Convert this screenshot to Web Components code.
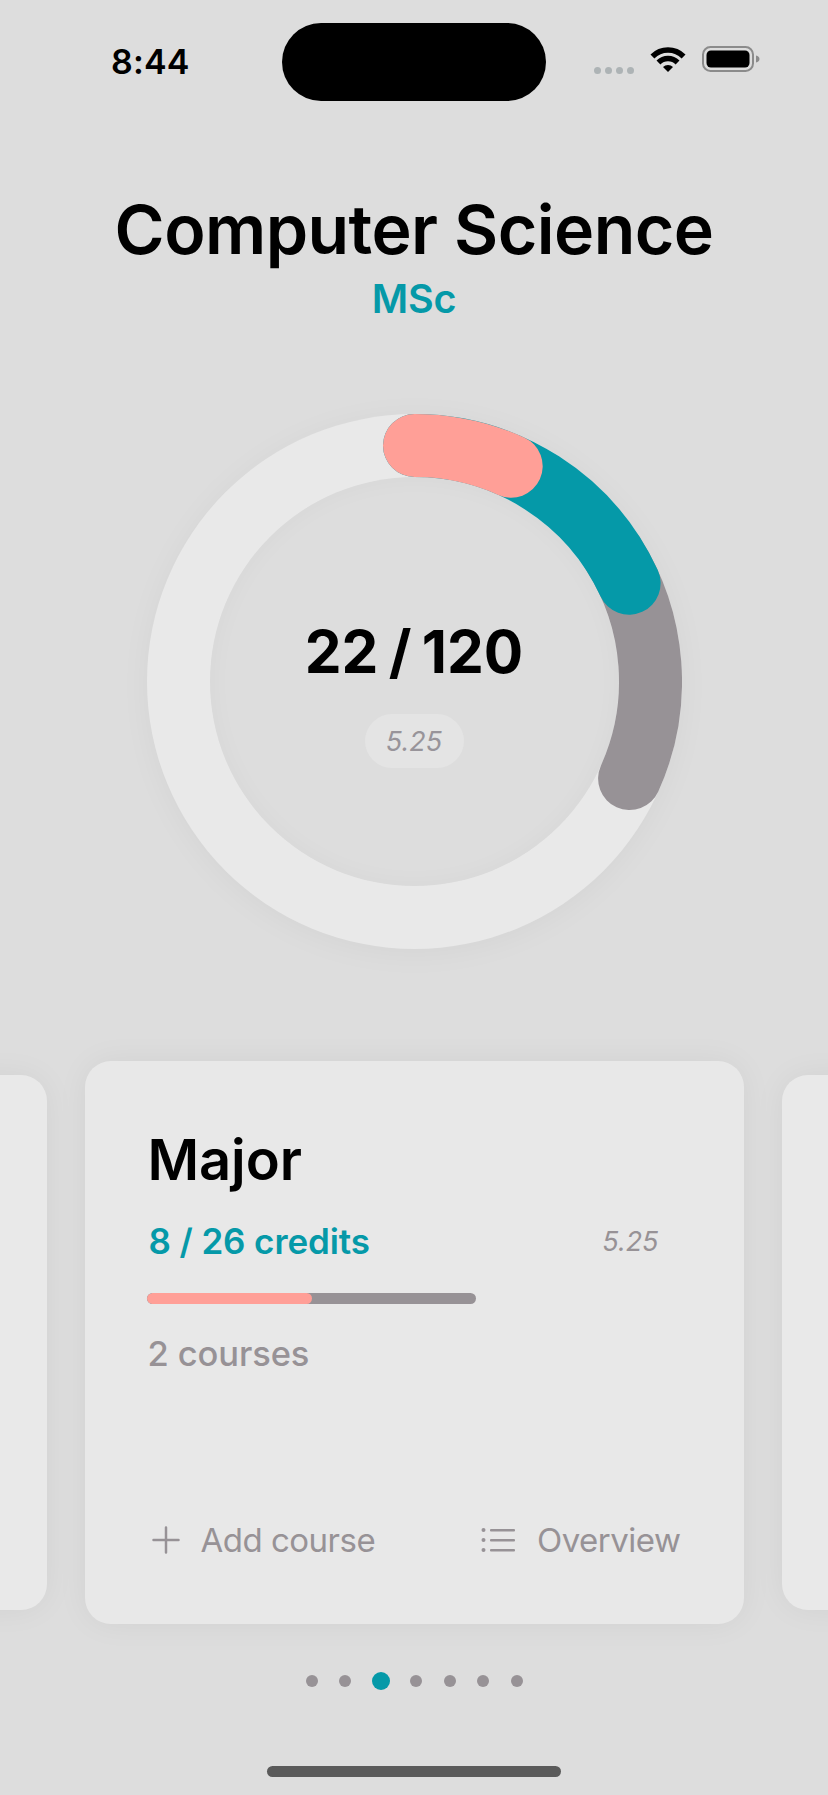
<!DOCTYPE html>
<html lang="en"><head><meta charset="utf-8"><title>Computer Science</title>
<style>
html,body{margin:0;padding:0;background:#ddd}
body{width:828px;height:1795px;overflow:hidden;font-family:Inter,"Liberation Sans",sans-serif;color:#000}
</style></head><body>
<app-screen>
  <status-bar time="8:44"></status-bar>
  <program-header title="Computer Science" degree="MSc"></program-header>
  <credit-ring value="22 / 120" grade="5.25"></credit-ring>
  <card-rail>
    <card-surface side></card-surface>
    <card-surface>
      <course-card name="Major" credits="8 / 26 credits" grade="5.25" courses="2 courses"></course-card>
    </card-surface>
    <card-surface side></card-surface>
  </card-rail>
  <page-dots count="7" active="2"></page-dots>
  <home-indicator></home-indicator>
</app-screen>
<script>
function def(name, css, html, init){
  customElements.define(name, class extends HTMLElement{
    connectedCallback(){
      if(this.shadowRoot) return;
      const r=this.attachShadow({mode:'open'});
      const a=n=>this.getAttribute(n)||'';
      r.innerHTML='<style>'+css+'</style>'+(typeof html==='function'?html(a):html);
      if(init) init(r,this);
    }
  });
}
def('app-screen',':host{display:flex;flex-direction:column;width:828px;height:1795px;background:#ddd;overflow:hidden}','<slot></slot>');
def('status-bar',`
:host{display:flex;align-items:center;height:78px;margin-top:23px;position:relative;font-family:Inter,sans-serif}
.time{width:282px;padding-left:111px;box-sizing:border-box;font-size:34px;font-weight:600;line-height:1;letter-spacing:.2px}
.island{width:264px;height:78px;border-radius:39px;background:#000;flex:none}
.right{display:flex;align-items:center;margin-left:48px;height:26px;position:relative;top:-3.5px}
.sig{display:flex;gap:4px;margin-top:23px;margin-right:15.5px}
.sig i{width:7px;height:7px;border-radius:50%;background:#adb3b5;display:block}
.wifi{width:36px;height:26px;display:block;margin-right:16px}
.bat{width:58px;height:26px;display:block}
`,a=>`<div class="time">${a('time')}</div><div class="island"></div>
<div class="right"><div class="sig"><i></i><i></i><i></i><i></i></div>
<svg class="wifi" viewBox="0 0 36 26" fill="none" stroke="#000" stroke-width="5.5">
<path d="M2.44 10.44A22 22 0 0 1 33.56 10.44"/><path d="M8.45 16.45A13.5 13.5 0 0 1 27.55 16.45"/>
<path d="M18 26L13 21A7 7 0 0 1 23 21Z" fill="#000" stroke="none"/></svg>
<svg class="bat" viewBox="0 0 58 26"><rect x="1" y="1" width="50" height="24" rx="7.5" fill="none" stroke="#8b8b8b" stroke-width="2"/><rect x="4.5" y="4.5" width="43" height="17" rx="4.5" fill="#000"/><path d="M54 9.5c2.2.6 3.5 1.8 3.5 3.5s-1.300 2.900-3.500 3.500Z" fill="#8b8b8b"/></svg>
</div>`);
def('program-header',`
:host{display:block;text-align:center;margin-top:90px}
h1{margin:0;font-size:68px;line-height:76px;font-weight:600;letter-spacing:-.56px}
p{margin:10px 0 0;font-size:39.5px;line-height:44px;font-weight:600;color:#0599a8;letter-spacing:-.2px}
`,a=>`<h1>${a('title')}</h1><p>${a('degree')}</p>`);
def('credit-ring',`
:host{display:grid;width:535px;height:535px;margin:93px auto 0;border-radius:50%;background:#e9e9e9;box-shadow:0 4px 32px rgba(0,0,0,.04)}
:host>*{grid-area:1/1}
.disc{width:409px;height:409px;margin:63px;border-radius:50%;background:#dddddd;box-shadow:inset 0 0 26px rgba(0,0,0,.03)}
svg{width:535px;height:535px;display:block}
.mid{display:flex;flex-direction:column;align-items:center}
.val{margin-top:203px;font-size:58.5px;line-height:70px;font-weight:700;word-spacing:-3.5px}
.pill{margin-top:27px;width:99px;height:54px;border-radius:27px;background:#e4e4e4;display:flex;align-items:center;justify-content:center;font-size:27px;font-style:italic;color:#98949a}
`,a=>`<div class="disc"></div>
<svg viewBox="-267.500 -267.500 535 535" fill="none" stroke-width="63" stroke-linecap="round">
<path d="M0 -236A236 236 0 0 1 215.100 97.100" stroke="#979296" pathLength="1" stroke-dasharray="0.5 2" stroke-dashoffset="-0.5"/>
<path d="M0 -236A236 236 0 0 1 214.600 -98.300" stroke="#0599a8"/>
<path d="M0 -236A236 236 0 0 1 96.700 -215.300" stroke="#ff9f97"/>
</svg>
<div class="mid"><div class="val">${a('value')}</div><div class="pill">${a('grade')}</div></div>`);
def('card-rail',':host{display:flex;justify-content:center;align-items:center;gap:38px;margin-top:112px;height:563px}','<slot></slot>');
def('card-surface',`
:host{display:flex;flex:none;width:659px;height:563px;border-radius:26px;background:#e8e8e8;box-shadow:0 0 32px rgba(0,0,0,.05)}
:host([side]){height:535px;background:#e9e9e9}
`,'<slot></slot>');
def('course-card',`
:host{display:flex;flex-direction:column;flex:1;padding:65px 63px 0 62px;color:#979296}
h2{margin:0;font-size:56px;line-height:68px;font-weight:600;color:#000;padding-left:1px;letter-spacing:-.1px}
.row{display:flex;justify-content:space-between;align-items:center;margin-top:26px;height:42px;padding-right:22px;padding-left:2px}
.cr{font-size:35px;font-weight:600;color:#0599a8;letter-spacing:-.1px}
.gr{font-size:27px;font-style:italic}
.bar{display:flex;width:329px;height:11px;border-radius:6px;background:#979296;margin-top:31px;overflow:hidden}
.bar i{display:block;width:165px;background:#ff9f97;border-radius:6px}
.cnt{margin-top:29px;padding-left:1px;font-size:34.5px;line-height:42px;font-weight:500;letter-spacing:-.1px}
.foot{display:flex;justify-content:space-between;margin-top:auto;margin-bottom:63px;padding-left:5px;font-size:33px;line-height:42px;letter-spacing:-.5px}
.act{display:flex;align-items:center}
svg{display:block;flex:none}
.a1 svg{margin-right:21px}.a2 svg{margin-right:22px}
`,a=>`<h2>${a('name')}</h2>
<div class="row"><span class="cr">${a('credits')}</span><span class="gr">${a('grade')}</span></div>
<div class="bar"><i></i></div>
<div class="cnt">${a('courses')}</div>
<div class="foot">
<div class="act a1"><svg width="28" height="28" viewBox="0 0 28 28" fill="none" stroke="#979296" stroke-width="2.500" stroke-linecap="round"><path d="M14 1.500V26.500M1.500 14H26.500"/></svg>Add course</div>
<div class="act a2"><svg width="34" height="24" viewBox="0 0 34 24" fill="#979296"><circle cx="2.500" cy="2" r="2"/><circle cx="2.500" cy="12" r="2"/><circle cx="2.500" cy="22" r="2"/><rect x="9" y="1" width="25" height="2.500" rx="1"/><rect x="9" y="11" width="25" height="2.500" rx="1"/><rect x="9" y="21" width="25" height="2.500" rx="1"/></svg>Overview</div>
</div>`);
def('page-dots',`
:host{display:flex;justify-content:center;align-items:center;gap:21.5px;height:18px;margin-top:48px}
i{display:block;width:12px;height:12px;border-radius:50%;background:#979296}
i.on{width:18px;height:18px;background:#0599a8;margin:0 -1px}
`,a=>{let s='';for(let k=0;k<+a('count');k++)s+=`<i class="${k==+a('active')?'on':''}"></i>`;return s;});
def('home-indicator',`
:host{display:block;width:294px;height:11px;border-radius:6px;background:#5a5a5a;margin:76px auto 0}
`,'');
</script>
</body></html>
